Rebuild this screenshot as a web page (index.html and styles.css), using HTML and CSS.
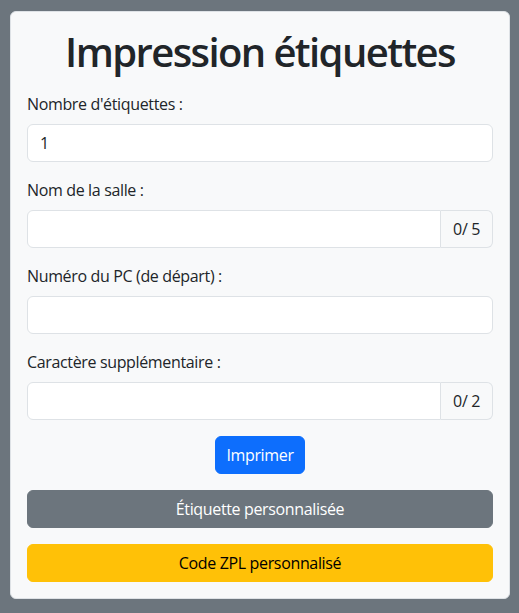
FILE: index.html
```html
<!DOCTYPE html>
<html lang="fr">
<head>
<meta charset="utf-8">
<title>Impression étiquettes</title>
<link rel="stylesheet" href="styles.css">
</head>
<body>
<div class="card">
  <h1 class="title">Impression étiquettes</h1>
  <div class="field">
    <label class="label">Nombre d'étiquettes :</label>
    <input class="control" type="text" value="1">
  </div>
  <div class="field">
    <label class="label">Nom de la salle :</label>
    <div class="group">
      <input class="control grouped" type="text">
      <span class="addon">0/ 5</span>
    </div>
  </div>
  <div class="field">
    <label class="label">Numéro du PC (de départ) :</label>
    <input class="control" type="text">
  </div>
  <div class="field">
    <label class="label">Caractère supplémentaire :</label>
    <div class="group">
      <input class="control grouped" type="text">
      <span class="addon">0/ 2</span>
    </div>
  </div>
  <div class="center">
    <button class="btn btn-primary">Imprimer</button>
  </div>
  <button class="btn btn-secondary block">Étiquette personnalisée</button>
  <button class="btn btn-warning block">Code ZPL personnalisé</button>
</div>
</body>
</html>
```
FILE: styles.css
```css
* { box-sizing: border-box; }
body {
  margin: 0;
  background: #6c757d;
  font-family: "Open Sans", "Noto Sans", sans-serif;
  font-size: 16px;
  line-height: 24px;
  color: #212529;
  padding: 11px 9px 14px 10px;
  letter-spacing: -0.35px;
}
.card {
  background: #f8f9fa;
  border: 1px solid #dee2e6;
  border-radius: 6px;
  padding: 16px;
  display: flex;
  flex-direction: column;
  gap: 16px;
}
.title {
  margin: 0;
  font-size: 40px;
  line-height: 48px;
  font-weight: 600;
  text-align: center;
  letter-spacing: -1.6px;
}
.field { display: flex; flex-direction: column; gap: 8px; }
.label { display: block; }
.control {
  display: block;
  width: 100%;
  height: 38px;
  padding: 6px 12px;
  font: inherit;
  letter-spacing: inherit;
  color: #212529;
  background: #fff;
  border: 1px solid #dee2e6;
  border-radius: 6px;
  outline: none;
}
.group { display: flex; height: 38px; }
.grouped {
  flex: 1;
  min-width: 0;
  border-top-right-radius: 0;
  border-bottom-right-radius: 0;
}
.addon {
  display: flex;
  align-items: center;
  padding: 0 12px;
  background: #f8f9fa;
  border: 1px solid #dee2e6;
  border-left: 0;
  border-radius: 0 6px 6px 0;
  white-space: nowrap;
}
.center { display: flex; justify-content: center; }
.btn {
  font: inherit;
  letter-spacing: inherit;
  height: 38px;
  padding: 0 10px;
  border: 1px solid transparent;
  border-radius: 6px;
  cursor: pointer;
}
.block { width: 100%; }
.btn-primary { background: #0d6efd; border-color: #0d6efd; color: #fff; }
.btn-secondary { background: #6c757d; border-color: #6c757d; color: #fff; }
.btn-warning { background: #ffc107; border-color: #ffc107; color: #000; }
```
